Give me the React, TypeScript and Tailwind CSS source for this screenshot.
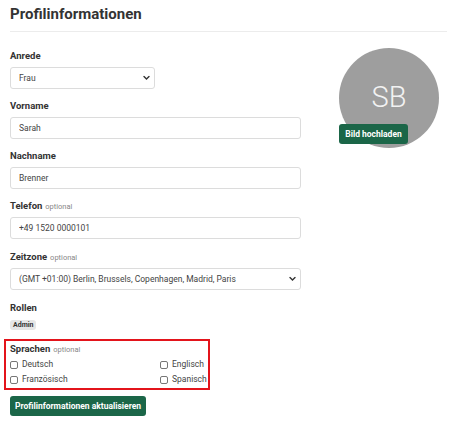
import { useState } from 'react';

const font = { fontFamily: 'Roboto, "Noto Sans", sans-serif' };

function Label({ text, optional }: { text: string; optional?: boolean }) {
  return (
    <div className="mb-[3px] h-4 text-[9.5px] font-bold leading-4 text-[#333]">
      {text}
      {optional && <span className="ml-[3px] text-[7.5px] font-normal text-[#888]">optional</span>}
    </div>
  );
}

function Chevron() {
  return (
    <svg
      className="pointer-events-none absolute right-[5px] top-1/2 -translate-y-1/2"
      width="7"
      height="5"
      viewBox="0 0 7 5"
      fill="none"
    >
      <path d="M1 1l2.5 2.5L6 1" stroke="#333" strokeWidth="1.4" strokeLinecap="round" />
    </svg>
  );
}

function Select({ value, options, width }: { value: string; options: string[]; width: string }) {
  const [v, setV] = useState(value);
  return (
    <div className={`relative ${width}`}>
      <select
        value={v}
        onChange={(e) => setV(e.target.value)}
        className="block h-[22px] w-full appearance-none rounded-[3px] border border-[#dcdcdc] bg-white pl-[8px] text-[8.5px] text-[#444] outline-none"
      >
        {options.map((o) => (
          <option key={o}>{o}</option>
        ))}
      </select>
      <Chevron />
    </div>
  );
}

function TextInput({ value }: { value: string }) {
  const [v, setV] = useState(value);
  return (
    <input
      value={v}
      onChange={(e) => setV(e.target.value)}
      className="block h-[22px] w-full rounded-[3px] border border-[#dcdcdc] bg-white px-[8px] text-[8.5px] text-[#444] outline-none"
    />
  );
}

function Check({ label }: { label: string }) {
  return (
    <label className="flex h-[15px] items-center gap-[4px] text-[8.5px] text-[#444]">
      <input
        type="checkbox"
        className="h-[8px] w-[8px] appearance-none rounded-[2px] border border-[#777] bg-white checked:bg-[#1b6648]"
      />
      {label}
    </label>
  );
}

export default function App() {
  return (
    <div className="h-[424px] w-[450px] overflow-hidden bg-white" style={font}>
      <h1 className="px-[10px] pt-[3px] text-[15px] font-bold leading-[22px] text-[#333]">
        Profilinformationen
      </h1>
      <div className="ml-[10px] mr-[3px] mt-[6px] border-t border-[#ececec]" />

      <div className="mt-[16px] flex pl-[10px]">
        <form className="w-[291px]" onSubmit={(e) => e.preventDefault()}>
          <div className="mb-[9px]">
            <Label text="Anrede" />
            <Select value="Frau" options={['Frau', 'Herr', 'Divers']} width="w-[145px]" />
          </div>
          <div className="mb-[9px]">
            <Label text="Vorname" />
            <TextInput value="Sarah" />
          </div>
          <div className="mb-[9px]">
            <Label text="Nachname" />
            <TextInput value="Brenner" />
          </div>
          <div className="mb-[10px]">
            <Label text="Telefon" optional />
            <TextInput value="+49 1520 0000101" />
          </div>
          <div className="mb-[10px]">
            <Label text="Zeitzone" optional />
            <Select
              value="(GMT +01:00) Berlin, Brussels, Copenhagen, Madrid, Paris"
              options={['(GMT +01:00) Berlin, Brussels, Copenhagen, Madrid, Paris']}
              width="w-full"
            />
          </div>
          <div className="h-4 text-[9.5px] font-bold leading-4 text-[#333]">Rollen</div>
          <div className="mt-[4px] flex">
            <span className="rounded-[3px] bg-[#e6e6e6] px-[3px] text-[7px] font-bold leading-[10px] text-[#333]">
              Admin
            </span>
          </div>

          <div className="-ml-[6px] mt-[9px] w-[206px] border-2 border-[#e3141b] pl-[4px] pr-[3px]">
            <div className="h-4 text-[9.5px] font-bold leading-4 text-[#333]">
              Sprachen
              <span className="ml-[3px] text-[7.5px] font-normal text-[#888]">optional</span>
            </div>
            <div className="grid grid-cols-[150px_1fr] pb-[1px]">
              <Check label="Deutsch" />
              <Check label="Englisch" />
              <Check label="Französisch" />
              <Check label="Spanisch" />
            </div>
          </div>

          <button
            type="submit"
            className="mt-[6px] block h-[20px] w-[136px] rounded-[3px] bg-[#1b6648] text-[8.5px] font-bold text-white"
          >
            Profilinformationen aktualisieren
          </button>
        </form>

        <div className="ml-[38px]">
          <div className="relative h-[100px] w-[100px] rounded-full bg-[#9e9e9e]">
            <div className="flex h-full items-center justify-center text-[29px] font-light text-[#f2f2f2]">
              SB
            </div>
            <button
              type="button"
              className="absolute left-0 top-[76px] h-[20px] w-[69px] rounded-[3px] bg-[#1b6648] text-[8.5px] font-bold text-white"
            >
              Bild hochladen
            </button>
          </div>
        </div>
      </div>
    </div>
  );
}
